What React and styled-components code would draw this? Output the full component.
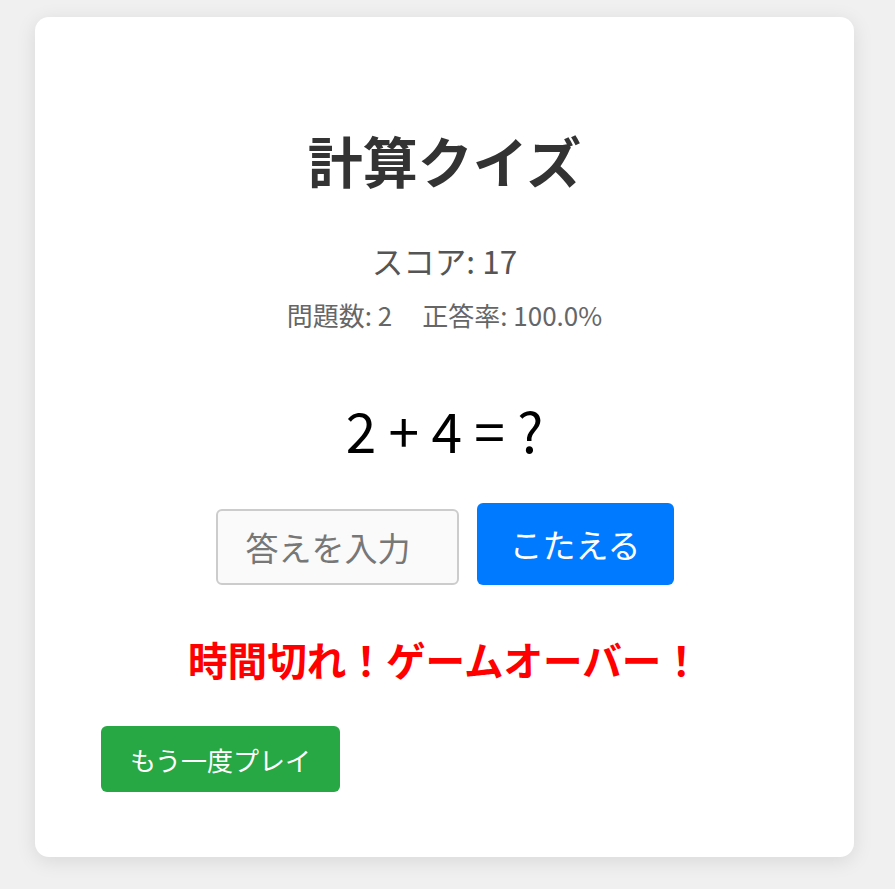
import styled, { createGlobalStyle } from "styled-components";

const GlobalStyle = createGlobalStyle`
  body {
    margin: 0;
    background-color: #f0f0f0;
    font-family: "Noto Sans CJK JP", "Noto Sans", sans-serif;
  }
`;

export default function App() {
  return (
    <>
      <GlobalStyle />
      <Page>
        <Card>
          <Title>計算クイズ</Title>
          <Score>スコア: 17</Score>
          <Stats>
            <span>問題数: 2</span>
            <span>正答率: 100.0%</span>
          </Stats>
          <Problem>2 + 4 = ?</Problem>
          <AnswerRow>
            <AnswerInput type="text" placeholder="答えを入力" />
            <AnswerButton>こたえる</AnswerButton>
          </AnswerRow>
          <GameOver>時間切れ！ゲームオーバー！</GameOver>
          <RetryButton>もう一度プレイ</RetryButton>
        </Card>
      </Page>
    </>
  );
}

const Page = styled.div`
  padding: 17px 41px 32px 35px;
`;

const Card = styled.div`
  box-sizing: border-box;
  width: 819px;
  min-height: 840px;
  padding: 102px 66px 65px;
  background-color: #fff;
  border-radius: 14px;
  box-shadow: 0 4px 20px rgba(0, 0, 0, 0.1);
  display: flex;
  flex-direction: column;
`;

const Title = styled.h1`
  margin: 0;
  text-align: center;
  font-size: 55px;
  font-weight: 700;
  color: #333;
`;

const Score = styled.div`
  margin-top: 38px;
  text-align: center;
  font-size: 31.5px;
  color: #555;
`;

const Stats = styled.div`
  margin-top: 13px;
  display: flex;
  justify-content: center;
  gap: 30px;
  font-size: 26px;
  color: #666;
`;

const Problem = styled.div`
  margin-top: 56px;
  text-align: center;
  font-size: 55px;
  color: #000;
`;

const AnswerRow = styled.div`
  margin-top: 34px;
  display: flex;
  justify-content: center;
  align-items: flex-end;
  gap: 18px;
`;

const AnswerInput = styled.input`
  box-sizing: border-box;
  width: 243px;
  height: 76px;
  padding: 0 28px;
  border: 2px solid #ccc;
  border-radius: 6px;
  background-color: #fafafa;
  font-family: inherit;
  font-size: 33px;
  color: #333;
  outline: none;

  &::placeholder {
    color: #777;
  }
`;

const AnswerButton = styled.button`
  box-sizing: border-box;
  width: 197px;
  height: 82px;
  padding: 0;
  border: none;
  border-radius: 6px;
  background-color: #007bff;
  color: #fff;
  font-family: inherit;
  font-size: 33px;
  cursor: pointer;
`;

const GameOver = styled.div`
  margin-top: 45px;
  text-align: center;
  font-size: 39.6px;
  font-weight: 700;
  color: #ff0000;
`;

const RetryButton = styled.button`
  align-self: flex-start;
  box-sizing: border-box;
  margin-top: 39px;
  width: 239px;
  height: 66px;
  border: none;
  border-radius: 6px;
  background-color: #28a745;
  color: #fff;
  font-family: inherit;
  font-size: 26px;
  cursor: pointer;
`;
